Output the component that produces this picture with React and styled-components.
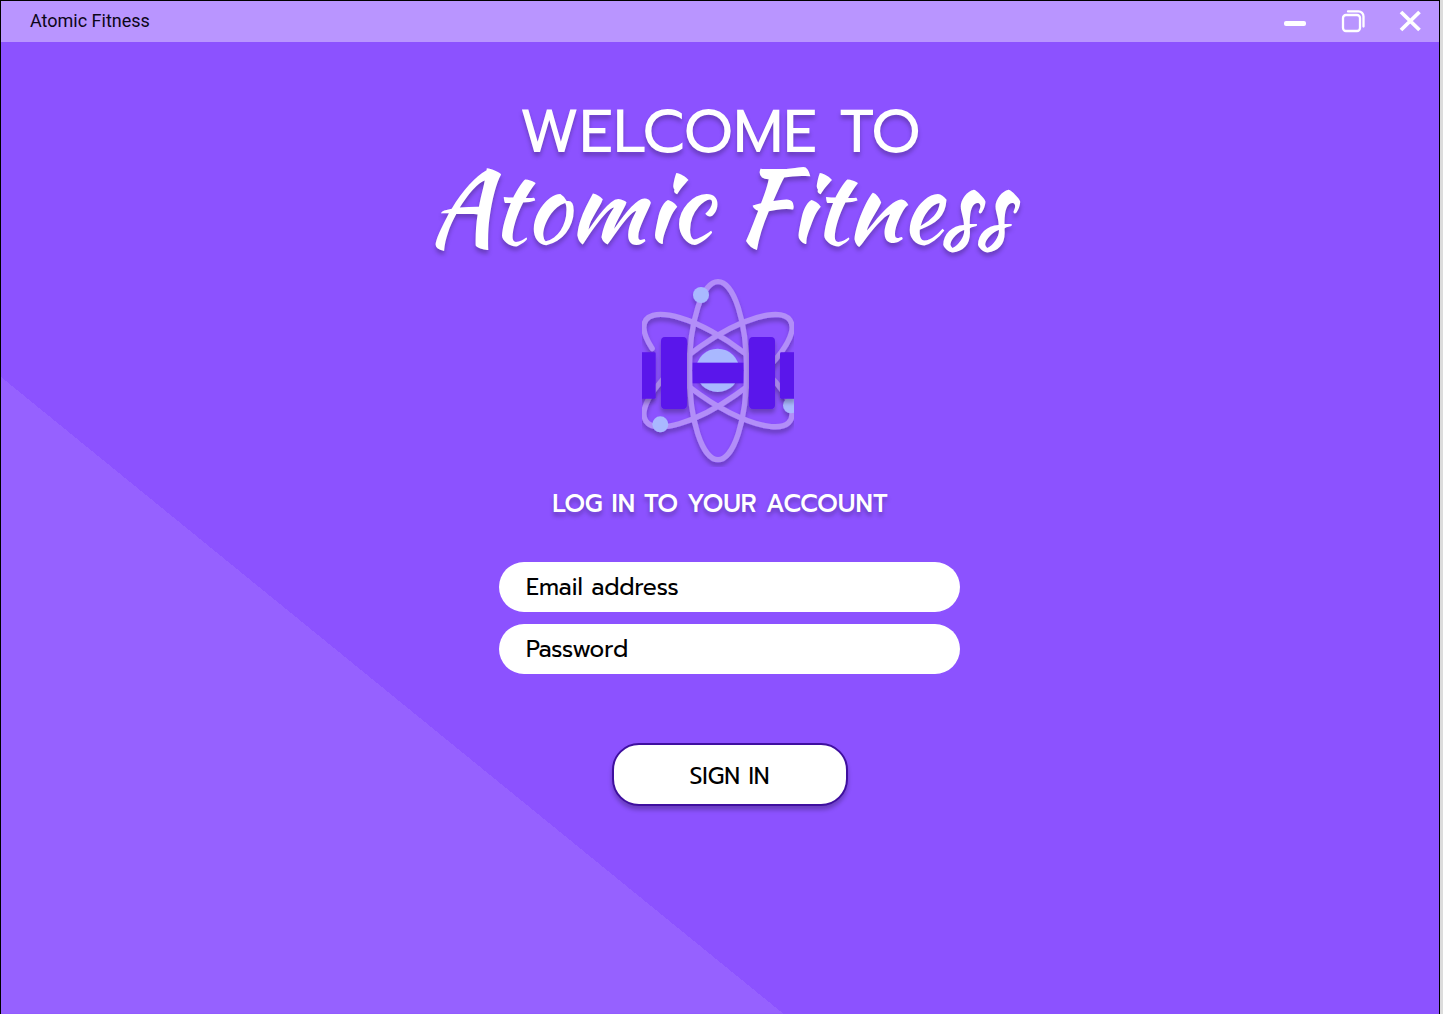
import React from "react";
import styled, { createGlobalStyle } from "styled-components";

const GlobalStyle = createGlobalStyle`
  *, *::before, *::after { box-sizing: border-box; }
  body {
    margin: 0;
    background: #dcdcdc;
    font-family: Prompt, Inter, sans-serif;
  }
`;

const Window = styled.div`
  display: flex;
  flex-direction: column;
  min-height: 100vh;
  margin-right: 3px;
  border: 1px solid #000;
  border-bottom: 0;
`;

const TitleBar = styled.header`
  display: flex;
  align-items: center;
  justify-content: space-between;
  height: 41px;
  padding: 0 15px 2px 29px;
  background: #b995ff;
`;

const AppName = styled.span`
  font: 400 18px/24px Roboto, sans-serif;
  color: #0c0618;
`;

const Controls = styled.div`
  display: flex;
  gap: 32px;
`;

const ControlButton = styled.button`
  display: flex;
  padding: 0;
  border: 0;
  background: none;
  color: #fff;
  cursor: pointer;
`;

const Main = styled.main`
  flex: 1;
  display: flex;
  flex-direction: column;
  align-items: center;
  padding: 58px 16px 32px;
  background: linear-gradient(to top right, #9661ff 50%, transparent 50%) left
    bottom / 54.4% 65.5% no-repeat #8c52ff;
`;

const Heading = styled.h1`
  margin: 0;
  text-align: center;
  color: #fff;
  font-weight: 400;
  text-shadow: 0 4px 4px rgba(0, 0, 0, 0.25);
`;

const Greeting = styled.span`
  display: block;
  font-size: 60px;
  line-height: 64px;
`;

const Brand = styled.span`
  display: block;
  font: 400 100px/86px "Kaushan Script", Lato, cursive;
`;

const Logo = styled.svg`
  width: 152px;
  height: 190px;
  margin: 27px 4px 21px 0;
`;

const Subtitle = styled.h2`
  margin: 0;
  font-size: 25px;
  line-height: 32px;
  font-weight: 500;
  color: #fff;
  text-shadow: 0 4px 4px rgba(0, 0, 0, 0.25);
`;

const Form = styled.form`
  display: flex;
  flex-direction: column;
  align-items: center;
  gap: 12px;
  width: 480px;
  max-width: 100%;
  margin-top: 42px;
  padding-left: 19px;
`;

const Field = styled.input`
  width: 100%;
  height: 50px;
  padding: 0 27px;
  border: 0;
  border-radius: 25px;
  background: #fff;
  color: #000;
  font: 400 23px/32px Prompt, Inter, sans-serif;

  &::placeholder {
    color: #000;
    opacity: 1;
  }
`;

const SubmitButton = styled.button`
  width: 236px;
  height: 63px;
  margin-top: 57px;
  padding: 4px 0 0;
  border: 2px solid #3f0f9f;
  border-radius: 27px;
  background: #fff;
  color: #000;
  font: 400 23px/32px Prompt, Inter, sans-serif;
  box-shadow: 0 4px 4px rgba(0, 0, 0, 0.25);
  cursor: pointer;
`;

function MinimizeIcon() {
  return (
    <svg width="26" height="26" viewBox="0 0 26 26" aria-hidden="true">
      <rect x="2" y="13" width="22" height="5" rx="2" fill="currentColor" />
    </svg>
  );
}

function RestoreIcon() {
  return (
    <svg width="26" height="26" viewBox="0 0 26 26" fill="none" stroke="currentColor" strokeWidth="2.3" aria-hidden="true">
      <rect x="3" y="7" width="17" height="16" rx="3" />
      <path d="M8 3.4H18.5a5 5 0 0 1 5 5V18.5" strokeLinecap="round" />
    </svg>
  );
}

function CloseIcon() {
  return (
    <svg width="26" height="26" viewBox="0 0 26 26" stroke="currentColor" strokeWidth="3.8" aria-hidden="true">
      <path d="M3 4 21.5 22M21.5 4 3 22" />
    </svg>
  );
}

function AtomLogo() {
  return (
    <Logo viewBox="36 21 456 570" role="img" aria-label="Atomic Fitness logo">
      <defs>
        <filter id="soft" x="-10%" y="-10%" width="120%" height="120%">
          <feDropShadow dx="0" dy="12" stdDeviation="6" floodColor="#000" floodOpacity="0.25" />
        </filter>
      </defs>
      <g filter="url(#soft)">
        <g fill="none" stroke="#b28ef8" strokeWidth="16" strokeLinecap="round">
          <path d="M66.5 235.4A264 90 35 1 1 120.5 299.5" />
          <ellipse cx="264" cy="302" rx="264" ry="90" transform="rotate(-35 264 302)" />
          <ellipse cx="264" cy="302" rx="86" ry="267" />
        </g>
        <g fill="#a9b8ff">
          <circle cx="263" cy="301" r="65" />
          <circle cx="213" cy="75" r="24" />
          <circle cx="91" cy="463" r="24" />
          <circle cx="483" cy="406" r="24" />
        </g>
      </g>
      <g fill="#5a16eb" filter="url(#soft)">
        <rect x="93" y="201" width="78" height="216" rx="12" />
        <rect x="357" y="201" width="78" height="216" rx="12" />
        <rect x="30" y="247" width="47" height="139" rx="4" />
        <rect x="450" y="247" width="47" height="139" rx="4" />
      </g>
      <rect x="188" y="278" width="152" height="62" fill="#5a16eb" />
    </Logo>
  );
}

export default function App() {
  return (
    <>
      <GlobalStyle />
      <Window>
        <TitleBar>
          <AppName>Atomic Fitness</AppName>
          <Controls>
            <ControlButton type="button" aria-label="Minimize"><MinimizeIcon /></ControlButton>
            <ControlButton type="button" aria-label="Restore"><RestoreIcon /></ControlButton>
            <ControlButton type="button" aria-label="Close"><CloseIcon /></ControlButton>
          </Controls>
        </TitleBar>
        <Main>
          <Heading>
            <Greeting>WELCOME TO</Greeting>
            <Brand>Atomic Fitness</Brand>
          </Heading>
          <AtomLogo />
          <Subtitle>LOG IN TO YOUR ACCOUNT</Subtitle>
          <Form onSubmit={(event) => event.preventDefault()}>
            <Field type="email" name="email" aria-label="Email address" placeholder="Email address" />
            <Field type="password" name="password" aria-label="Password" placeholder="Password" />
            <SubmitButton type="submit">SIGN IN</SubmitButton>
          </Form>
        </Main>
      </Window>
    </>
  );
}
